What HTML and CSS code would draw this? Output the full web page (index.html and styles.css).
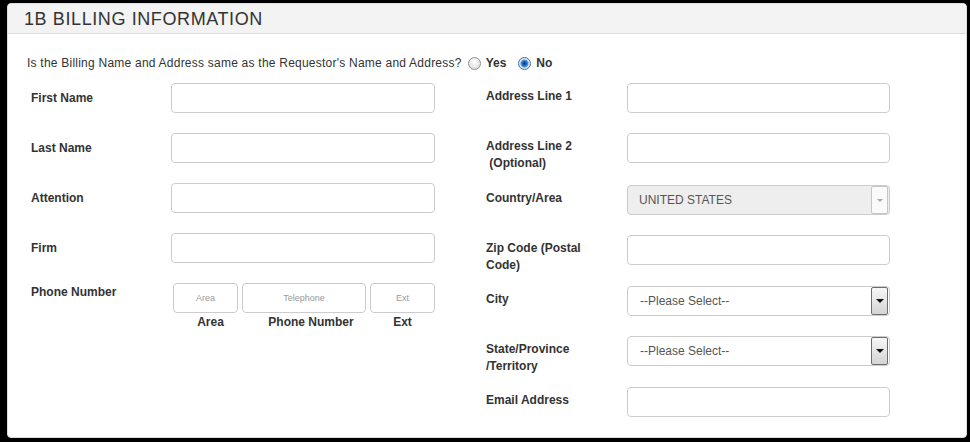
FILE: index.html
```html
<!DOCTYPE html>
<html>
<head>
<meta charset="utf-8">
<link rel="stylesheet" href="styles.css">
</head>
<body>
<div class="panel">
  <div class="panel-head">1B BILLING INFORMATION</div>
  <div class="panel-body">
    <div class="question">
      <span class="q-text">Is the Billing Name and Address same as the Requestor's Name and Address?</span>
      <span class="radio"></span><b class="opt">Yes</b>
      <span class="radio checked"></span><b class="opt">No</b>
    </div>
    <div class="form">
      <div class="col col-left">
        <div class="row"><div class="label">First Name</div><div class="input"></div></div>
        <div class="row"><div class="label">Last Name</div><div class="input"></div></div>
        <div class="row"><div class="label">Attention</div><div class="input"></div></div>
        <div class="row"><div class="label">Firm</div><div class="input"></div></div>
        <div class="row">
          <div class="label label-phone">Phone Number</div>
          <div class="phone">
            <div class="phone-inputs">
              <div class="input small area">Area</div>
              <div class="input small tel">Telephone</div>
              <div class="input small ext">Ext</div>
            </div>
            <div class="phone-labels">
              <b class="pl area-l">Area</b>
              <b class="pl tel-l">Phone Number</b>
              <b class="pl ext-l">Ext</b>
            </div>
          </div>
        </div>
      </div>
      <div class="col col-right">
        <div class="row"><div class="label">Address Line 1</div><div class="input"></div></div>
        <div class="row"><div class="label">Address Line 2<br>&nbsp;(Optional)</div><div class="input"></div></div>
        <div class="row plus2"><div class="label">Country/Area</div>
          <div class="input select disabled"><span>UNITED STATES</span><span class="btn"><span class="tri"></span></span></div></div>
        <div class="row"><div class="label">Zip Code (Postal<br>Code)</div><div class="input"></div></div>
        <div class="row plus1"><div class="label">City</div>
          <div class="input select"><span>--Please Select--</span><span class="btn"><span class="tri"></span></span></div></div>
        <div class="row"><div class="label">State/Province<br>/Territory</div>
          <div class="input select"><span>--Please Select--</span><span class="btn"><span class="tri"></span></span></div></div>
        <div class="row plus1"><div class="label">Email Address</div><div class="input"></div></div>
      </div>
    </div>
  </div>
</div>
</body>
</html>
```
FILE: styles.css
```css
html, body {
  margin: 0;
  padding: 0;
  background: #000;
}
body {
  font-family: "Liberation Sans", Arial, sans-serif;
  color: #333;
  font-size: 12px;
}
.panel {
  box-sizing: border-box;
  margin: 3px 0 0 7px;
  width: 960px;
  height: 435px;
  background: #fff;
  border: 1px solid #ddd;
  border-radius: 4px;
  overflow: hidden;
}
.panel-head {
  height: 29px;
  line-height: 30px;
  background: #f3f3f3;
  border-bottom: 1px solid #ddd;
  padding-left: 16px;
  font-size: 18px;
  letter-spacing: 0.6px;
  color: #333;
}
.panel-body {
  padding: 21px 0 0 19px;
}
.question {
  display: flex;
  align-items: center;
  line-height: 17px;
  height: 17px;
  margin-bottom: 11px;
}
.q-text {
  letter-spacing: 0.23px;
}
.radio {
  box-sizing: border-box;
  width: 13px;
  height: 13px;
  border-radius: 50%;
  border: 1px solid #8f8f8f;
  background: radial-gradient(circle at 50% 35%, #ffffff 0%, #e6e6e6 60%, #cfcfcf 100%);
  margin-left: 6px;
}
.radio.checked {
  margin-left: 12px;
  border-color: #4a6a8c;
  background: radial-gradient(circle at 50% 50%, #0b2f6b 0px, #1f66c2 2px, #4f95e0 3.5px, #dbe7f3 4.5px, #f4f7fa 100%);
}
.opt {
  margin-left: 5px;
  font-weight: bold;
}
.form {
  display: flex;
  padding-left: 4px;
  gap: 51px;
}
.col {
  display: flex;
  flex-direction: column;
  gap: 20px;
}
.row {
  display: flex;
  height: 30px;
}
.row.plus1 { margin-top: 1px; }
.row.plus2 { margin-top: 2px; }
.label {
  font-weight: bold;
  line-height: 17px;
  padding-top: 7px;
  white-space: nowrap;
}
.col-left .label { width: 140px; }
.col-right .label { width: 141px; padding-top: 5px; }
.col-left .label.label-phone { padding-top: 1px; }
.input {
  box-sizing: border-box;
  height: 30px;
  border: 1px solid #ccc;
  border-radius: 4px;
  background: #fff;
}
.col-left .input { width: 264px; }
.col-right .input { width: 263px; }
.phone {
  margin-left: 2px;
}
.phone-inputs {
  display: flex;
  gap: 4px;
}
.col-left .input.small {
  display: flex;
  align-items: center;
  justify-content: center;
  font-size: 9px;
  color: #999;
}
.col-left .input.area, .col-left .input.ext { width: 65px; }
.col-left .input.tel { width: 124px; }
.phone-labels {
  display: flex;
  margin-top: 1px;
  line-height: 17px;
}
.pl {
  text-align: center;
  font-weight: bold;
}
.area-l { width: 65px; padding-left: 10px; box-sizing: border-box; }
.tel-l { width: 132px; padding-left: 14px; box-sizing: border-box; }
.ext-l { width: 65px; }
.input.select {
  display: flex;
  align-items: center;
  justify-content: space-between;
  padding: 0 1px 0 12px;
  color: #555;
  font-size: 12px;
}
.input.select.disabled {
  background: #eee;
  padding-left: 11px;
}
.btn {
  box-sizing: border-box;
  width: 17px;
  height: 28px;
  border: 1px solid #6e6e6e;
  border-radius: 2px;
  background: linear-gradient(#f7f7f7, #d4d4d4);
  display: flex;
  align-items: center;
  justify-content: center;
}
.tri {
  width: 0;
  height: 0;
  border-left: 4px solid transparent;
  border-right: 4px solid transparent;
  border-top: 4px solid #111;
}
.disabled .btn {
  border: 1px solid #c6c6c6;
  background: #fafafa;
}
.disabled .tri {
  border-top-color: #aaa;
  border-left-width: 3px;
  border-right-width: 3px;
  border-top-width: 3px;
}
```
